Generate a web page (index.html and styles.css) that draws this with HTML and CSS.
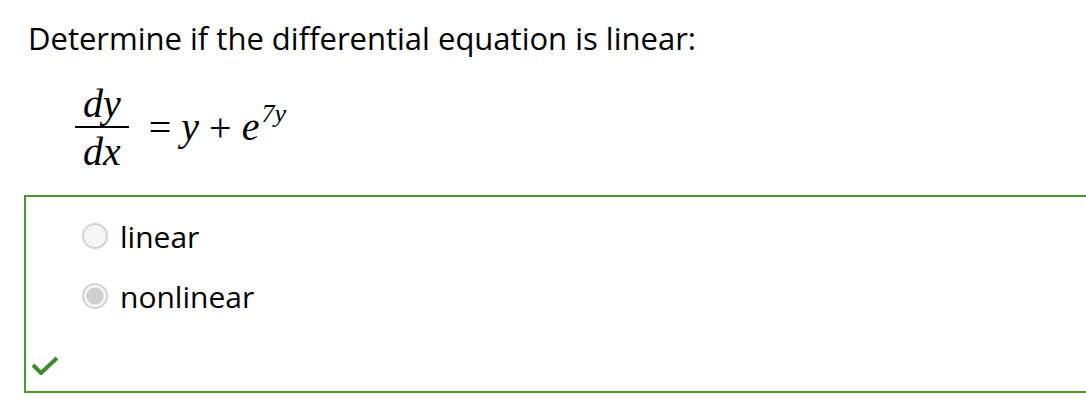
FILE: index.html
```html
<!DOCTYPE html>
<html lang="en">
<head>
    <meta charset="UTF-8">
    <title>Linear or Nonlinear</title>
    <link rel="stylesheet" href="styles.css">
</head>
<body>
    <div class="question">
        <p class="prompt">Determine if the differential equation is linear:</p>

        <div class="equation">
            <span class="frac">
                <span class="num"><i>dy</i></span>
                <span class="den"><i>dx</i></span>
            </span>
            <span class="rhs"><span class="op">=</span><i>y</i><span class="op">+</span><i>e</i><sup><span class="up">7</span><i>y</i></sup></span>
        </div>
    </div>

    <div class="answers">
        <label class="choice">
            <span class="radio"></span>
            <span class="choice-text">linear</span>
        </label>
        <label class="choice">
            <span class="radio checked"></span>
            <span class="choice-text">nonlinear</span>
        </label>

        <svg class="mark" width="28" height="20" viewBox="0 0 28 20">
            <path d="M2 10 L10 18 L26 3" fill="none" stroke="#3d8b2a" stroke-width="4"/>
        </svg>
    </div>
</body>
</html>
```

FILE: styles.css
```css
body {
    margin: 0;
    background-color: #ffffff;
    font-family: "Open Sans", Lato, sans-serif;
    color: #000;
    overflow: hidden;
}
.question {
    padding: 18px 0 0 28px;
}
.prompt {
    margin: 0;
    font-size: 31px;
    line-height: 40px;
}
.equation {
    display: flex;
    align-items: center;
    margin: 30px 0 0 45px;
    font-family: "Liberation Serif", "DejaVu Serif", serif;
    font-size: 40px;
}
.frac {
    display: inline-flex;
    flex-direction: column;
    align-items: center;
    padding: 0 2px;
}
.num {
    line-height: 32px;
    padding: 0 8px 6px;
    border-bottom: 2px solid #000;
}
.den {
    line-height: 32px;
    padding-top: 8px;
}
.rhs {
    margin-left: 8px;
    margin-top: -2px;
}
.op {
    font-style: normal;
    margin: 0 10px;
}
.rhs sup {
    font-size: 26px;
    position: relative;
    top: -4px;
    margin-left: 2px;
}
.up {
    font-style: italic;
}
.answers {
    display: flex;
    flex-direction: column;
    margin: 27px 0 0 24px;
    width: 1100px;
    height: 194px;
    border: 2px solid #4a9a30;
    border-right: none;
    box-sizing: content-box;
    padding: 0;
}
.choice {
    display: flex;
    align-items: center;
    margin-left: 56px;
    height: 30px;
}
.choice:first-child {
    margin-top: 24px;
}
.choice + .choice {
    margin-top: 30px;
}
.radio {
    width: 22px;
    height: 22px;
    border: 2px solid #d4d4d4;
    border-radius: 50%;
    background-color: #f6f6f6;
    box-sizing: content-box;
}
.radio.checked {
    background: radial-gradient(circle, #cfcfcf 0 8px, #f6f6f6 9px);
}
.choice-text {
    margin-left: 12px;
    font-size: 30px;
}
.mark {
    margin: auto 0 16px 5px;
}
```
